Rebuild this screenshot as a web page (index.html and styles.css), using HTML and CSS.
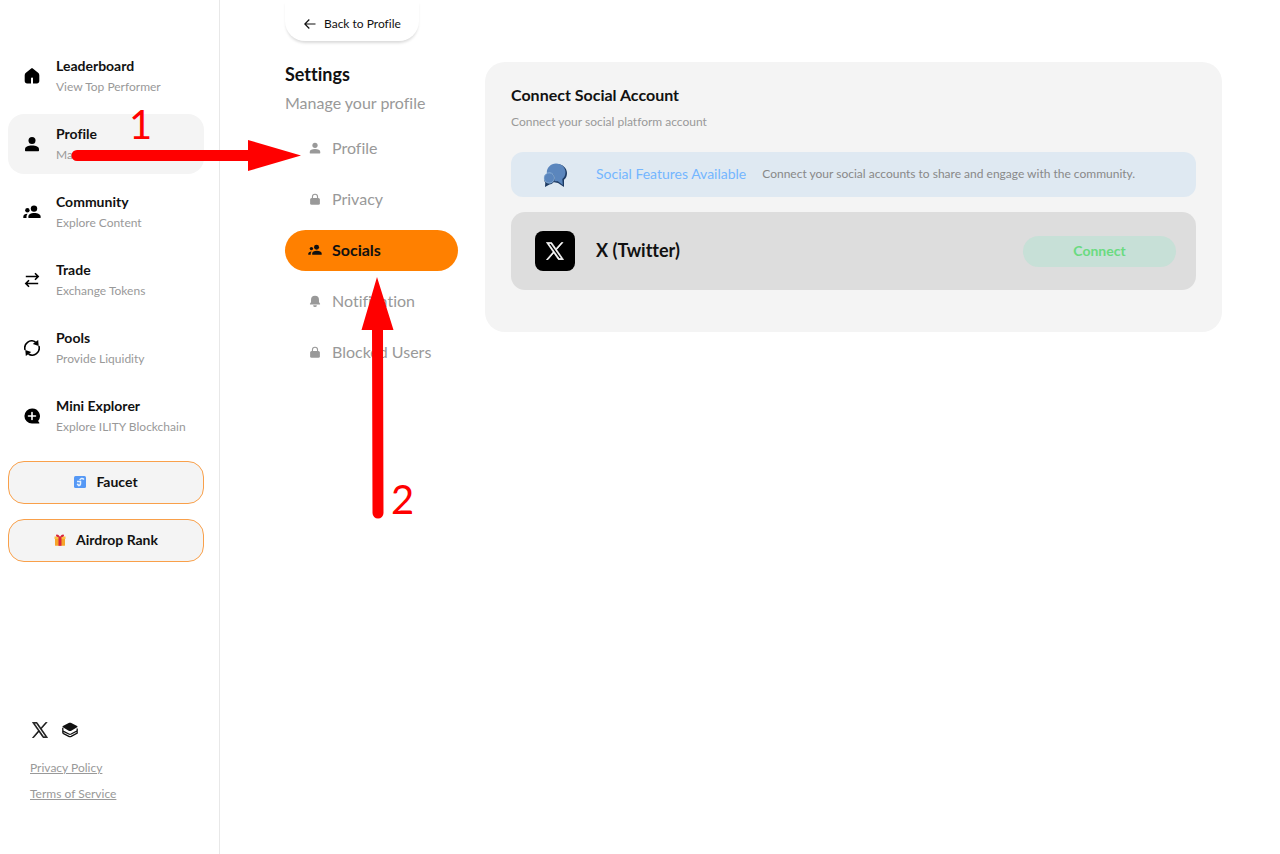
FILE: index.html
```html
<!DOCTYPE html>
<html lang="en">
<head>
  <meta charset="UTF-8">
  <meta name="viewport" content="width=device-width, initial-scale=1.0">
  <title>Settings - Socials</title>
  <link rel="stylesheet" href="styles.css">
</head>
<body>

<!-- shared icons -->
<svg class="sprite" aria-hidden="true">
  <symbol id="icon-user" viewBox="0 0 16 16">
    <circle cx="8" cy="4.4" r="3.5"/>
    <path d="M1 13.200C1 10.600 4 9.400 8 9.400s7 1.200 7 3.800v1.300c0 .4-.3.7-.7.7H1.700c-.4 0-.7-.3-.7-.7z"/>
  </symbol>
  <symbol id="icon-users" viewBox="0 0 18 16">
    <circle cx="11" cy="4.600" r="3.200"/>
    <circle cx="4.400" cy="6.200" r="2.200"/>
    <path d="M5.400 12.600c0-2.400 2.400-3.600 5.900-3.600s6.300 1.200 6.300 3.600v1.500H5.400z"/>
    <path d="M4.600 9.800C1.900 9.900.3 11 .3 12.800v1.300h3.200v-1.500c0-1.100.4-2 1.100-2.800z"/>
  </symbol>
  <symbol id="icon-lock" viewBox="0 0 16 16">
    <path d="M4.600 7V5a3.400 3.400 0 0 1 6.800 0v2" fill="none" stroke="currentColor" stroke-width="1.500"/>
    <rect x="1.500" y="6.600" width="13" height="9" rx="2"/>
  </symbol>
  <symbol id="icon-x" viewBox="0 0 24 24">
    <path fill-rule="evenodd" stroke="currentColor" stroke-width=".9" d="M14.200 10.200 22.700.500h-2l-7.400 8.400L7.400.500H.600l8.900 12.800L.600 23.500h2l7.800-8.900 6.200 8.900h6.800zM3.400 2h3.100l14.200 20h-3.100z"/>
  </symbol>
</svg>

<div class="layout">
  <aside class="sidebar">
    <nav class="menu" aria-label="Main">
      <a href="#" class="menu-item">
        <svg class="menu-icon" viewBox="0 0 16 16"><path d="M8 .3c.4 0 .8.1 1.100.4l5 4c.8.600 1.200 1.500 1.200 2.500v5.800c0 1.400-1 2.500-2.400 2.500H9v-5.200c0-.5-.4-.9-1-.9s-1 .4-1 .9v5.200H3.100C1.700 15.500.7 14.400.7 13V7.200c0-1 .4-1.900 1.200-2.500l5-4C7.200.4 7.600.3 8 .3z"/></svg>
        <span class="menu-text"><strong>Leaderboard</strong><small>View Top Performer</small></span>
      </a>
      <a href="#" class="menu-item active">
        <svg class="menu-icon"><use href="#icon-user"/></svg>
        <span class="menu-text"><strong>Profile</strong><small>Manage</small></span>
      </a>
      <a href="#" class="menu-item">
        <svg class="menu-icon wide"><use href="#icon-users"/></svg>
        <span class="menu-text"><strong>Community</strong><small>Explore Content</small></span>
      </a>
      <a href="#" class="menu-item">
        <svg class="menu-icon line" viewBox="0 0 16 16"><path d="M1.800 4.500h12.400M11 1.300l3.200 3.200L11 7.700M14.200 11.500H1.800M5 8.300l-3.200 3.200L5 14.700"/></svg>
        <span class="menu-text"><strong>Trade</strong><small>Exchange Tokens</small></span>
      </a>
      <a href="#" class="menu-item">
        <svg class="menu-icon line" viewBox="0 0 16 16"><path d="M1.100 10A7 7 0 0 1 11.500 2M14.900 6A7 7 0 0 1 4.500 14"/><path class="solid" d="M10.500 3.700 13.500 1.500 13.800 4.900zM5.500 12.300 2.500 14.500 2.200 11.100z"/></svg>
        <span class="menu-text"><strong>Pools</strong><small>Provide Liquidity</small></span>
      </a>
      <a href="#" class="menu-item">
        <svg class="menu-icon" viewBox="0 0 16 16"><path d="M8 .4A7.600 7.600 0 1 0 8 15.600h7c.5 0 .7-.6.3-.9l-1.200-1.800A7.600 7.600 0 0 0 8 .4z"/><path d="M8 4.500v7M4.500 8h7" stroke="#fff" stroke-width="1.600" stroke-linecap="round"/></svg>
        <span class="menu-text"><strong>Mini Explorer</strong><small>Explore ILITY Blockchain</small></span>
      </a>
    </nav>

    <div class="extras">
      <button type="button" class="extra-btn">
        <svg class="extra-icon" viewBox="0 0 12 12"><rect width="12" height="12" rx="1.500" fill="#5598f5"/><path d="M10 3.500C8.500 1.800 6.500 2.200 5.800 4M3 5.500h3.500v2.200c0 1.300-1 1.800-2.500 1.800" fill="none" stroke="#e6f2ff" stroke-width="1.500"/><circle cx="3.800" cy="8.500" r="1" fill="#e6f2ff"/></svg>
        Faucet
      </button>
      <button type="button" class="extra-btn">
        <svg class="extra-icon" viewBox="0 0 12 12"><path d="M1 4h10v7.200c0 .4-.3.6-.6.6H1.600c-.3 0-.6-.2-.6-.6z" fill="#f6a52b"/><path d="M.5 2.500h11V5H.5z" fill="#fbbf43"/><path d="M4.500 3h3v8.800h-3z" fill="#d9263e"/><path d="M6 3C4.500-.2 1.800-.2 2 1.700 2.200 3 4.500 3 6 3s3.800 0 4-1.300C10.200-.2 7.500-.2 6 3z" fill="#d9263e"/></svg>
        Airdrop Rank
      </button>
    </div>

    <footer class="sidebar-footer">
      <div class="social-links">
        <a href="#" aria-label="X"><svg class="social-icon"><use href="#icon-x"/></svg></a>
        <a href="#" aria-label="GitBook"><svg class="social-icon" viewBox="0 0 16 16"><path d="M8 .8c.5 0 .9.1 1.300.3l5.800 3c.5.3.5.9 0 1.200L9.300 8.700c-.8.5-1.800.5-2.600 0L.9 5.300c-.5-.3-.5-.9 0-1.200l5.800-3C7.100.9 7.500.8 8 .8z"/><path d="M.8 5.800v2.300c0 .6.300 1 .8 1.300L6.800 12c.8.4 1.600.4 2.400 0l6-3.200V6.500M.8 8.500v1.700c0 .6.300 1.100.8 1.400l5.200 2.700c.8.4 1.600.4 2.400 0l6-3.200V8.800" fill="none" stroke="currentColor" stroke-width="1.300"/></svg></a>
      </div>
      <a href="#" class="legal">Privacy Policy</a>
      <a href="#" class="legal">Terms of Service</a>
    </footer>
  </aside>

  <main class="content">
    <section class="settings">
      <button type="button" class="back-btn">
        <svg class="back-icon" viewBox="0 0 12 12"><path d="M11.500 6H1M5.300 1.500.8 6l4.500 4.500"/></svg>
        Back to Profile
      </button>
      <h1>Settings</h1>
      <p class="settings-sub">Manage your profile</p>
      <nav class="tabs" aria-label="Settings">
        <a href="#" class="tab"><svg class="tab-icon"><use href="#icon-user"/></svg>Profile</a>
        <a href="#" class="tab"><svg class="tab-icon"><use href="#icon-lock"/></svg>Privacy</a>
        <a href="#" class="tab active"><svg class="tab-icon wide"><use href="#icon-users"/></svg>Socials</a>
        <a href="#" class="tab"><svg class="tab-icon" viewBox="0 0 16 16"><path d="M8 1a5.300 5.300 0 0 0-5.300 5.300v3L1.300 11.600c-.3.5 0 1 .5 1h12.400c.5 0 .8-.5.5-1l-1.400-2.300v-3A5.300 5.300 0 0 0 8 1zM5.500 13.500h5a2.500 2.500 0 0 1-5 0z"/></svg>Notification</a>
        <a href="#" class="tab"><svg class="tab-icon"><use href="#icon-lock"/></svg>Blocked Users</a>
      </nav>
    </section>

    <section class="panel">
      <h2>Connect Social Account</h2>
      <p class="panel-sub">Connect your social platform account</p>
      <div class="notice">
        <svg class="notice-icon" viewBox="0 0 24 24">
          <path d="M14 1c5.500 0 10 4 10 9 0 3-1 5.200-3 6.800L21 24l-6-4-5-1z" fill="#1d3a63"/>
          <path d="M13 .5c5.500 0 9.500 4 9.500 8.800 0 3-1.200 5.200-3.200 6.700l.5 6-5-3.800c-6 .8-11-3-11-8.700C3.800 4.500 7.800.5 13 .5z" fill="#5b86bd"/>
          <path d="M6.500 10c3.200 0 5.500 2.300 5.500 5.500S9.500 21.300 6.500 21.500L2 24l.3-4.500A6 6 0 0 1 1 15.500C1 12.300 3.300 10 6.500 10z" fill="#1d3a63"/>
          <circle cx="6.300" cy="15" r="5.200" fill="#5b86bd" stroke="#a9cdee" stroke-width=".6"/>
        </svg>
        <span class="notice-title">Social Features Available</span>
        <span class="notice-text">Connect your social accounts to share and engage with the community.</span>
      </div>
      <div class="account">
        <span class="account-logo"><svg viewBox="0 0 24 24"><use href="#icon-x"/></svg></span>
        <h3>X (Twitter)</h3>
        <button type="button" class="connect-btn">Connect</button>
      </div>
    </section>
  </main>
</div>

<!-- step arrows drawn over the page -->
<svg class="steps" width="460" height="560" viewBox="0 0 460 560">
  <path d="M77 155.500H252M377.500 328 378 513" stroke="#f00" stroke-width="11" stroke-linecap="round"/>
  <path d="M248 140 301 155.500 248 171zM377 277 393.500 330H361.500z" fill="#f00"/>
  <text x="129" y="139">1</text>
  <text x="391" y="514">2</text>
</svg>

</body>
</html>
```
FILE: styles.css
```css
* {
  box-sizing: border-box;
}
body {
  margin: 0;
  font-family: Lato, "Open Sans", sans-serif;
  font-size: 13px;
  font-variant-ligatures: none;
  color: #111;
  background-color: #fff;
}
h1, h2, h3, p {
  margin: 0;
}
a {
  color: inherit;
  text-decoration: none;
}
button {
  font-family: inherit;
  font-variant-ligatures: inherit;
  color: inherit;
  cursor: pointer;
}
svg {
  display: block;
  flex-shrink: 0;
  fill: currentColor;
}
.sprite {
  display: none;
}
.layout {
  display: flex;
  min-height: 100vh;
}

/* sidebar */
.sidebar {
  display: flex;
  flex-direction: column;
  flex: 0 0 220px;
  padding: 46px 15px 50px 8px;
  border-right: 1px solid #e8e8e8;
}
.menu {
  display: flex;
  flex-direction: column;
  gap: 8px;
}
.menu-item {
  display: flex;
  align-items: center;
  gap: 16px;
  height: 60px;
  padding: 0 16px;
  border-radius: 16px;
  white-space: nowrap;
}
.menu-item.active {
  background-color: #f4f4f4;
}
.menu-icon {
  width: 16px;
  height: 16px;
  color: #000;
}
.menu-icon.wide {
  width: 18px;
  margin: 0 -1px;
}
.menu-icon.line {
  fill: none;
  stroke: currentColor;
  stroke-width: 1.6;
}
.menu-icon .solid {
  fill: currentColor;
}
.menu-text strong, .menu-text small {
  display: block;
  line-height: 21px;
}
.menu-text strong {
  font-size: 14px;
}
.menu-text small {
  font-size: 12px;
  color: #999;
}
.extras {
  display: flex;
  flex-direction: column;
  gap: 15px;
  margin-top: 15px;
}
.extra-btn {
  display: flex;
  align-items: center;
  justify-content: center;
  gap: 10px;
  height: 43px;
  padding: 0 6px 2px;
  border: 1px solid #f9a04a;
  border-radius: 16px;
  background-color: #f4f4f4;
  font-size: 14px;
  font-weight: bold;
}
.extra-icon {
  width: 12px;
  height: 12px;
}
.sidebar-footer {
  display: flex;
  flex-direction: column;
  align-items: flex-start;
  margin-top: auto;
  padding-left: 22px;
}
.social-links {
  display: flex;
  gap: 14px;
  margin-bottom: 14px;
  padding-left: 2px;
}
.social-icon {
  width: 16px;
  height: 16px;
}
.legal {
  margin-top: 6px;
  font-size: 12px;
  line-height: 20px;
  color: #999;
  text-decoration: underline;
}

/* main area */
.content {
  display: flex;
  align-items: flex-start;
  gap: 27px;
  flex: 1;
  padding: 0 58px 0 65px;
}
.settings {
  flex: 0 0 173px;
}
.back-btn {
  display: flex;
  align-items: center;
  gap: 8px;
  height: 41px;
  padding: 6px 18px 0 19px;
  border: 0;
  border-radius: 0 0 20px 20px;
  background-color: #fff;
  box-shadow: 0 3px 3px -1px rgba(0, 0, 0, 0.15);
  font-size: 12px;
  white-space: nowrap;
}
.back-icon {
  width: 12px;
  height: 12px;
  fill: none;
  stroke: currentColor;
  stroke-width: 1.2;
}
h1 {
  margin-top: 21px;
  font-size: 18px;
  line-height: 24px;
}
.settings-sub {
  margin-top: 5px;
  font-size: 16px;
  line-height: 24px;
  color: #999;
}
.tabs {
  display: flex;
  flex-direction: column;
  gap: 10px;
  margin-top: 13px;
}
.tab {
  display: flex;
  align-items: center;
  gap: 11px;
  height: 41px;
  padding: 0 24px 2px;
  border-radius: 21px;
  font-size: 16px;
  color: #999;
  white-space: nowrap;
}
.tab.active {
  background-color: #ff8000;
  font-weight: bold;
  color: #111;
}
.tab-icon {
  width: 12px;
  height: 14px;
}
.tab-icon.wide {
  width: 14px;
  margin: 0 -1px;
}
.panel {
  flex: 1;
  margin-top: 62px;
  padding: 21px 26px 42px;
  border-radius: 20px;
  background-color: #f4f4f4;
}
h2 {
  font-size: 16px;
  line-height: 24px;
}
.panel-sub {
  margin-top: 5px;
  font-size: 12px;
  line-height: 20px;
  color: #999;
}
.notice {
  display: flex;
  align-items: center;
  min-height: 45px;
  margin-top: 20px;
  padding: 0 32px;
  border-radius: 12px;
  background-color: #dfe9f2;
}
.notice-icon {
  width: 24px;
  height: 24px;
}
.notice-title, .notice-text, h3 {
  padding-bottom: 2px;
}
.notice-title {
  margin-left: 29px;
  font-size: 14px;
  color: #74b6ff;
}
.notice-text {
  margin-left: 16px;
  font-size: 12px;
  color: #888;
}
.account {
  display: flex;
  align-items: center;
  min-height: 78px;
  margin-top: 15px;
  padding: 0 20px 0 24px;
  border-radius: 14px;
  background-color: #ddd;
}
.account-logo {
  display: flex;
  align-items: center;
  justify-content: center;
  width: 40px;
  height: 40px;
  border-radius: 8px;
  background-color: #000;
  color: #fff;
}
.account-logo svg {
  width: 18px;
  height: 18px;
}
h3 {
  margin-left: 21px;
  font-size: 18px;
}
.connect-btn {
  width: 153px;
  height: 31px;
  margin-left: auto;
  padding: 0 6px 2px;
  border: 0;
  border-radius: 16px;
  background-color: #c7e0d7;
  font-size: 14px;
  font-weight: bold;
  color: #6adb80;
}

/* tutorial overlay */
.steps {
  position: absolute;
  top: 0;
  left: 0;
  pointer-events: none;
}
.steps text {
  font-size: 40px;
  fill: #f00;
}
```
